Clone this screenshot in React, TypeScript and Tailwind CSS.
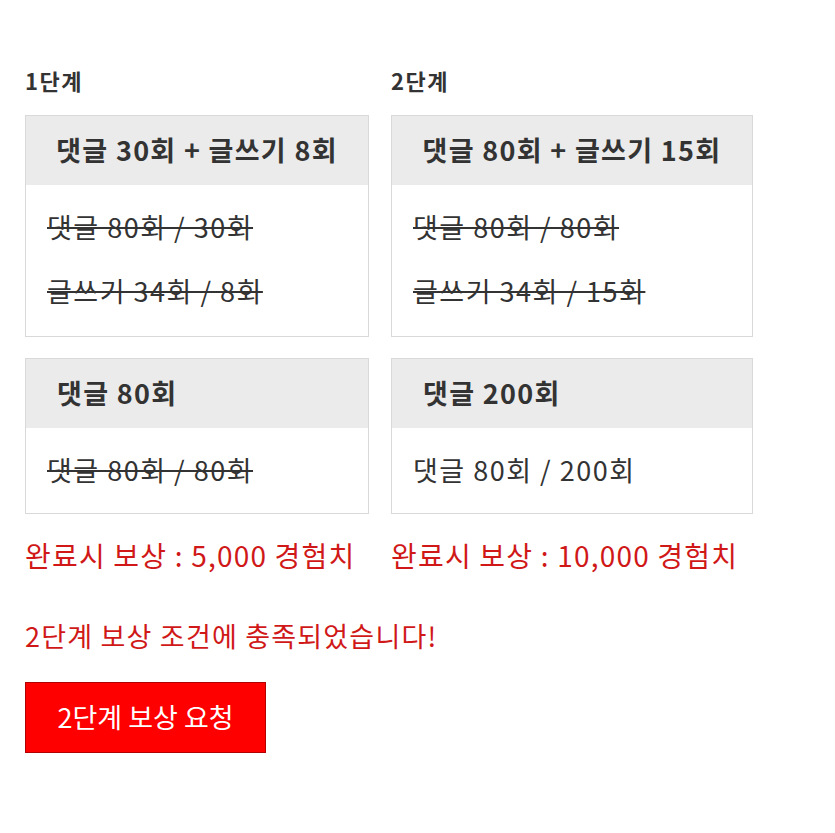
const font = { fontFamily: '"Noto Sans CJK KR", "Noto Sans", sans-serif' }

type Row = { text: string; done: boolean }

const Box = ({ title, rows, center }: { title: string; rows: Row[]; center?: boolean }) => (
    <div className="border border-[#d9d9d9] bg-white">
        <div
            className={`h-[69px] bg-[#ebebeb] flex items-center text-[27px] tracking-[1.3px] font-bold text-[#333] ${
                center ? "justify-center" : "pl-[31px]"
            }`}
        >
            {title}
        </div>
        <div className={`px-[21px] pt-[24px] flex flex-col gap-[28px] ${center ? "pb-[27px]" : "pb-[25px]"}`}>
            {rows.map((r) => (
                <div
                    key={r.text}
                    className={`text-[27px] tracking-[1.5px] leading-[36px] text-[#333] ${r.done ? "line-through decoration-2" : ""}`}
                >
                    {r.text}
                </div>
            ))}
        </div>
    </div>
)

const Stage = ({
    label,
    width,
    main,
    sub,
    reward,
}: {
    label: string
    width: string
    main: { title: string; rows: Row[] }
    sub: { title: string; rows: Row[] }
    reward: string
}) => (
    <div className={`${width} flex flex-col`}>
        <div className="text-[22px] tracking-[1.5px] font-bold text-[#333] leading-[28px] mb-[21px]">{label}</div>
        <Box title={main.title} rows={main.rows} center />
        <div className="h-[21px]" />
        <Box title={sub.title} rows={sub.rows} />
        <div className="mt-[23px] text-[28px] tracking-[1.2px] text-[#d01818] leading-[36px] whitespace-nowrap">{reward}</div>
    </div>
)

export default function App() {
    return (
        <div className="min-h-[833px] bg-white pt-[66px] px-[25px]" style={font}>
            <div className="flex gap-[22px]">
                <Stage
                    label="1단계"
                    width="w-[344px]"
                    main={{
                        title: "댓글 30회 + 글쓰기 8회",
                        rows: [
                            { text: "댓글 80회 / 30회", done: true },
                            { text: "글쓰기 34회 / 8회", done: true },
                        ],
                    }}
                    sub={{ title: "댓글 80회", rows: [{ text: "댓글 80회 / 80회", done: true }] }}
                    reward="완료시 보상 : 5,000 경험치"
                />
                <Stage
                    label="2단계"
                    width="w-[362px]"
                    main={{
                        title: "댓글 80회 + 글쓰기 15회",
                        rows: [
                            { text: "댓글 80회 / 80회", done: true },
                            { text: "글쓰기 34회 / 15회", done: true },
                        ],
                    }}
                    sub={{ title: "댓글 200회", rows: [{ text: "댓글 80회 / 200회", done: false }] }}
                    reward="완료시 보상 : 10,000 경험치"
                />
            </div>
            <div className="mt-[45px] text-[27px] tracking-[1.2px] text-[#d01818] leading-[36px]">2단계 보상 조건에 충족되었습니다!</div>
            <button className="mt-[28px] w-[241px] h-[71px] bg-[#ff0000] border border-[#b30000] text-white text-[27px]">
                2단계 보상 요청
            </button>
        </div>
    )
}
